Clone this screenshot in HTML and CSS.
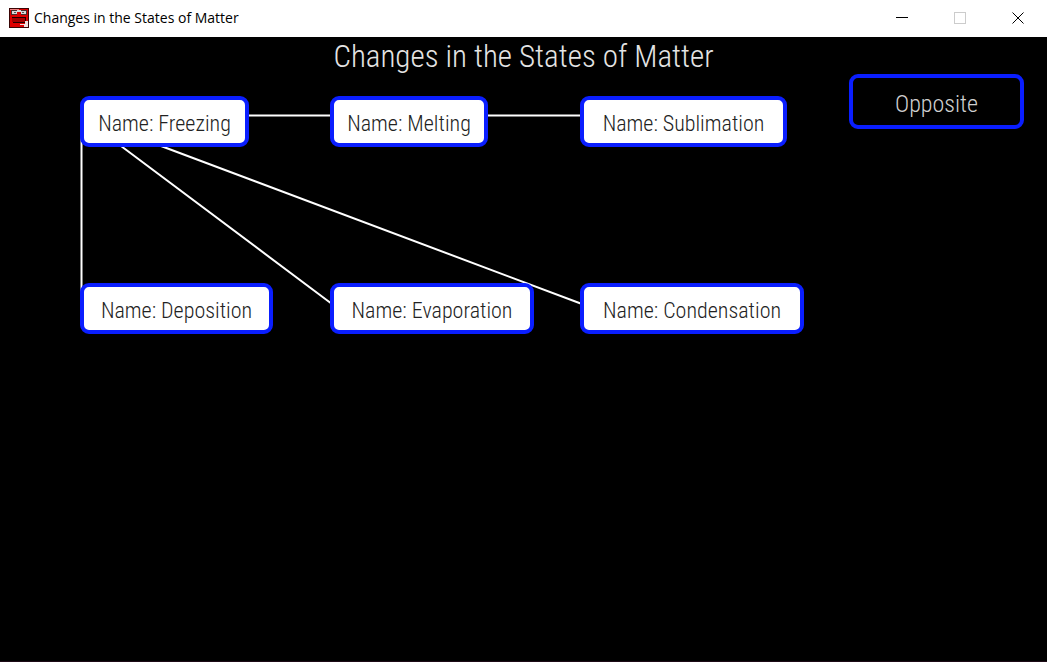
FILE: index.html
```html
<!DOCTYPE html>
<html lang="en">
<head>
<meta charset="utf-8">
<title>Changes in the States of Matter</title>
<link rel="stylesheet" href="styles.css">
</head>
<body>
<header class="titlebar">
  <svg class="app-icon" viewBox="0 0 20 20" shape-rendering="crispEdges" aria-hidden="true">
    <path fill="#3a0505" d="M0 0h20v20H0z"/>
    <path fill="#dd0000" d="M1 1h18v18H1z"/>
    <path fill="#f08080" d="M1 1h9v1H1z"/>
    <path fill="#4a3030" d="M2 2h6v5H2zM12 2h6v5h-6z"/>
    <path fill="#d8d8d8" d="M3 3h5v3H3zM12 3h5v3h-5zM8 2h4v2H8z"/>
    <path fill="#555" d="M5 4h2v1H5zM13 4h2v1h-2z"/>
    <path fill="#210000" d="M3 9h14v1H3zM16 10h1v4h-1zM4 14h12v1H4z"/>
    <path fill="#a50000" d="M3 10h13v4H3z"/>
    <path fill="#f0dede" d="M16 13h3v6h-4v-2h-4v-1h5z"/>
  </svg>
  <span class="window-title">Changes in the States of Matter</span>
  <div class="window-controls">
    <button class="control" aria-label="Minimize"><svg viewBox="0 0 12 12" shape-rendering="crispEdges"><path d="M0 5.500H12"/></svg></button>
    <button class="control" aria-label="Maximize" disabled><svg viewBox="0 0 12 12" shape-rendering="crispEdges"><path d="M.5.5h11v11H.5z"/></svg></button>
    <button class="control" aria-label="Close"><svg viewBox="0 0 12 12"><path d="M.5.5l11 11M11.500.5l-11 11"/></svg></button>
  </div>
</header>
<main class="canvas">
  <h1 class="heading">Changes in the States of Matter</h1>
  <svg class="links" aria-hidden="true">
    <path d="M247 78.500H332M486 78.500H582M81.500 100V255M121 109L332 267M161 109L582 267"/>
  </svg>
  <div class="node freezing">Name: Freezing</div>
  <div class="node melting">Name: Melting</div>
  <div class="node sublimation">Name: Sublimation</div>
  <div class="node deposition">Name: Deposition</div>
  <div class="node evaporation">Name: Evaporation</div>
  <div class="node condensation">Name: Condensation</div>
  <button class="opposite">Opposite</button>
</main>
</body>
</html>
```
FILE: styles.css
```css
* {
  box-sizing: border-box;
}

body {
  margin: 0;
  min-height: 100vh;
  display: flex;
  flex-direction: column;
  background: #000;
}

.titlebar {
  display: flex;
  align-items: center;
  height: 37px;
  padding-left: 9px;
  background: #fff;
  color: #000;
  font: 14px "Open Sans", "Noto Sans", sans-serif;
}

.app-icon {
  width: 20px;
  height: 20px;
  margin: 0 5px 2px 0;
}

.window-title {
  padding-bottom: 2px;
}

.window-controls {
  display: flex;
  align-self: stretch;
  margin-left: auto;
}

.control {
  display: flex;
  align-items: center;
  justify-content: center;
  width: 58px;
  padding: 0 0 2px;
  border: 0;
  background: none;
}

.control svg {
  width: 12px;
  height: 12px;
  fill: none;
  stroke: #000;
}

.control:disabled svg {
  stroke: #ccc;
}

.canvas {
  position: relative;
  flex: 1;
  border-bottom: 1px solid #1d0a16;
  font-family: "Roboto Condensed", "Open Sans Condensed", "Liberation Sans Narrow", sans-serif;
  font-weight: 300;
}

.heading {
  margin: 0;
  color: #e4e4e4;
  font-size: 31px;
  font-weight: 300;
  line-height: 40px;
  text-align: center;
}

.links {
  position: absolute;
  inset: 0;
  width: 100%;
  height: 100%;
  fill: none;
  stroke: #fff;
  stroke-width: 2px;
}

.node,
.opposite {
  position: absolute;
  display: flex;
  align-items: center;
  justify-content: center;
  border: 4px solid #0a1eff;
  border-radius: 9px;
  white-space: nowrap;
}

.node {
  height: 51px;
  padding-top: 3px;
  background: #fff;
  color: #222;
  font-size: 22px;
}

.freezing,
.melting,
.sublimation {
  top: 59px;
}

.deposition,
.evaporation,
.condensation {
  top: 246px;
}

.freezing,
.deposition {
  left: 80px;
}

.melting,
.evaporation {
  left: 330px;
}

.sublimation,
.condensation {
  left: 580px;
}

.freezing {
  width: 169px;
}

.melting {
  width: 158px;
}

.sublimation {
  width: 207px;
}

.deposition {
  width: 193px;
}

.evaporation {
  width: 204px;
}

.condensation {
  width: 224px;
}

.opposite {
  top: 37px;
  right: 23px;
  width: 175px;
  height: 55px;
  padding: 4px 0 0;
  background: #000;
  color: #d0d0d0;
  font-family: inherit;
  font-size: 24px;
  font-weight: 300;
}
```
